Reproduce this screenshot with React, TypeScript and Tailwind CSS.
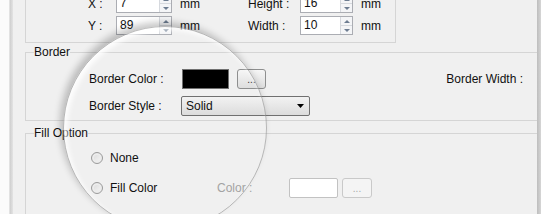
import React from "react";

const font = { fontFamily: '"Liberation Sans", Arial, sans-serif' };

function Spinner() {
  return (
    <div className="flex flex-col w-[12px] h-full border-l border-[#d6d9de] bg-[#f4f5f7]">
      <div className="flex-1 flex items-center justify-center border-b border-[#d6d9de]">
        <svg width="6" height="3" viewBox="0 0 6 3">
          <path d="M0 3 L3 0 L6 3 Z" fill="#6d7d91" />
        </svg>
      </div>
      <div className="flex-1 flex items-center justify-center">
        <svg width="6" height="3" viewBox="0 0 6 3">
          <path d="M0 0 L3 3 L6 0 Z" fill="#6d7d91" />
        </svg>
      </div>
    </div>
  );
}

function SpinInput({ value, width }: { value: string; width: string }) {
  return (
    <div className={`flex h-[19px] border border-[#abadb3] bg-white ${width}`}>
      <div className="flex-1 pl-[3px] leading-[17px]">{value}</div>
      <Spinner />
    </div>
  );
}

function DotsButton({ disabled }: { disabled?: boolean }) {
  return (
    <div
      className={`flex items-end justify-center h-[20px] rounded-[3px] border pb-[3px] text-[10px] leading-none ${
        disabled
          ? "w-[30px] border-[#c9c9c9] bg-[#f4f4f4] text-[#a8a8a8]"
          : "w-[29px] border-[#8e8f8f] bg-gradient-to-b from-[#f6f6f6] to-[#dedede] text-[#333]"
      }`}
    >
      ...
    </div>
  );
}

function Radio() {
  return (
    <div className="w-[12px] h-[12px] rounded-full border border-[#9a9a9a] bg-gradient-to-br from-[#d8d8d8] to-[#f8f8f8] shadow-[inset_0_0_0_2px_#ececec]" />
  );
}

function Row({ label, value, label2, value2 }: { label: string; value: string; label2: string; value2: string }) {
  return (
    <div className="flex items-center h-[19px] pl-[62px]">
      <div className="w-[28px]">{label}</div>
      <SpinInput value={value} width="w-[56px]" />
      <div className="pl-2 w-[76px]">mm</div>
      <div className="w-[52px]">{label2}</div>
      <SpinInput value={value2} width="w-[53px]" />
      <div className="pl-2">mm</div>
    </div>
  );
}

export default function App() {
  return (
    <div
      className="relative flex w-[550px] h-[214px] overflow-hidden bg-white text-[12px] text-[#111]"
      style={font}
    >
      <div className="w-[10px] bg-[#fbfbfb] border-r border-[#e2e2e2]" />
      <div className="w-[3px] bg-gradient-to-r from-[#cfcfcf] to-[#e4e4e4]" />

      <div className="w-[524px] bg-[#f0f0f0] pl-3 flex flex-col">
        {/* position / size box */}
        <div className="-mt-[6px] w-[371px] border-l border-r border-b border-[#d5d5d5] pb-[7px] flex flex-col gap-[3px]">
          <Row label="X :" value="7" label2="Height :" value2="16" />
          <Row label="Y :" value="89" label2="Width :" value2="10" />
        </div>

        {/* Border group */}
        <div className="relative mt-[9px] border-t border-l border-b border-[#d5d5d5] pt-[16px] pb-[4px] flex flex-col gap-[7px]">
          <div className="absolute -top-[8px] left-[8px] bg-[#f0f0f0] leading-[15px]">Border</div>
          <div className="flex items-center h-[20px] pl-[63px]">
            <div className="w-[93px]">Border Color :</div>
            <div className="w-[47px] h-[20px] bg-black border border-[#707070]" />
            <div className="ml-[8px]">
              <DotsButton />
            </div>
            <div className="ml-auto pr-[14px]">Border Width :</div>
          </div>
          <div className="flex items-center h-[20px] pl-[63px]">
            <div className="w-[92px]">Border Style :</div>
            <div className="flex items-center w-[129px] h-[20px] rounded-[2px] border border-[#707070] bg-gradient-to-b from-[#f2f2f2] to-[#dcdcdc] pl-[4px] pr-[5px]">
              <div className="flex-1">Solid</div>
              <svg width="7" height="4" viewBox="0 0 7 4">
                <path d="M0 0 L7 0 L3.5 4 Z" fill="#000" />
              </svg>
            </div>
          </div>
        </div>

        {/* Fill Option group */}
        <div className="relative mt-[12px] flex-1 border-t border-l border-[#d5d5d5] pt-[14px] flex flex-col gap-[10px]">
          <div className="absolute -top-[8px] left-[8px] bg-[#f0f0f0] leading-[15px]">Fill Option</div>
          <div className="flex items-center h-[20px] pl-[65px]">
            <Radio />
            <div className="ml-[7px]">None</div>
          </div>
          <div className="flex items-center h-[20px] pl-[65px]">
            <Radio />
            <div className="ml-[7px] w-[107px]">Fill Color</div>
            <div className="w-[72px] text-[#a3a3a3]">Color :</div>
            <div className="w-[49px] h-[20px] rounded-[2px] border border-[#c2c2c2] bg-white" />
            <div className="ml-[4px]">
              <DotsButton disabled />
            </div>
          </div>
        </div>
      </div>

      <div className="w-[4px] bg-gradient-to-r from-[#bdbdbd] to-[#d6d6d6]" />
      <div className="flex-1 bg-white" />

      {/* magnifier lens */}
      <div className="pointer-events-none absolute left-[63px] top-[26px] w-[204px] h-[204px] rounded-full border border-[#8f8f8f]/60 shadow-[-3px_-4px_7px_rgba(0,0,0,0.22),inset_3px_3px_5px_rgba(255,255,255,0.9)]" />
    </div>
  );
}
